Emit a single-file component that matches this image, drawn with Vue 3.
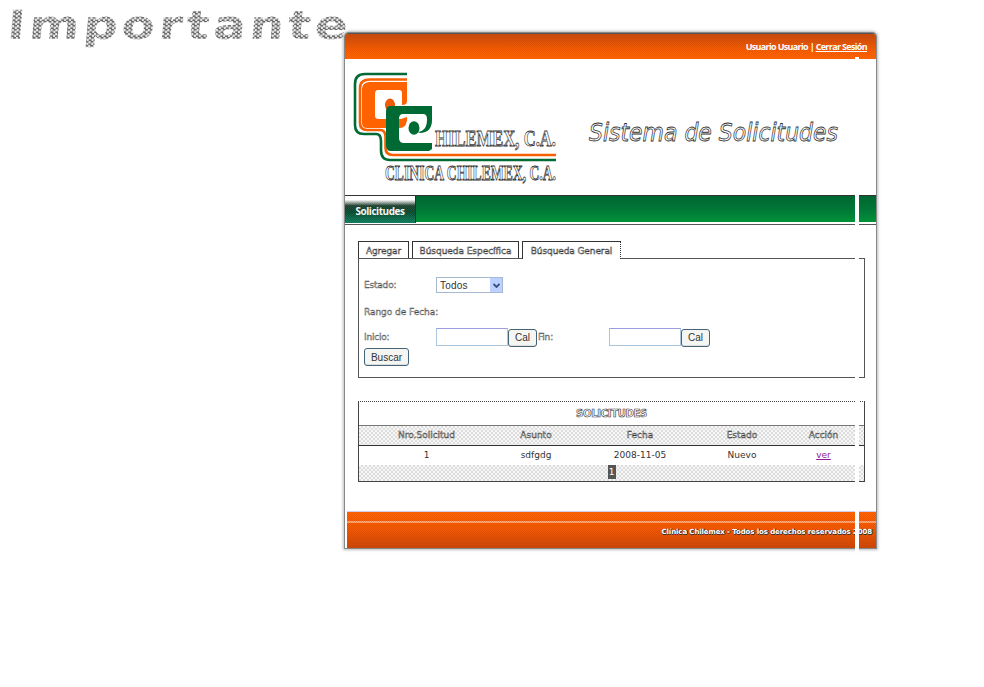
<script setup>
import { ref } from 'vue'

const tabs = [
  { label: 'Agregar', cls: 'tab-add' },
  { label: 'Búsqueda Específica', cls: 'tab-specific' },
  { label: 'Búsqueda General', cls: 'tab-general' },
]
const columns = ['Nro.Solicitud', 'Asunto', 'Fecha', 'Estado', 'Acción']
const rows = [{ id: '1', subject: 'sdfgdg', date: '2008-11-05', status: 'Nuevo' }]
const start = ref('')
const end = ref('')
</script>

<template>
  <div class="page">
    <h1 class="notice">Importante</h1>
    <div class="shell">
      <header class="top">
        <span>Usuario Usuario | <a>Cerrar Sesión</a></span>
      </header>

      <section class="brand">
        <svg class="logo" width="216" height="124" viewBox="0 0 216 124">
          <g fill="none" stroke-width="2.6">
            <path d="M57 6H15Q5 6 5 16V57Q5 66 14 66H26Q31 66 31 73V82Q31 92 40 92H206" stroke="#006b35" />
            <path d="M57 11.500H20Q10 11.500 10 20V55Q10 62 17 62H30Q35.500 62 35.500 69V80Q35.500 87 43 87H206" stroke="#f76000" />
          </g>
          <path fill="#ff6200" fill-rule="evenodd" d="M19 14H57V33Q57 37 52 37V25Q52 22 49 22H28Q25 22 25 26V48Q25 51 29 51H51L57 49V52Q56 60 50 60H17Q12 60 12 55V21Q12 15 19 14Z" />
          <ellipse cx="40" cy="37" rx="5" ry="6.500" fill="#ed5a08" />
          <path fill="#006a35" d="M40 38H82V52Q82 64 71 65L67 64Q72 64 75 60Q77 57 77 51Q77 46 73 46H53Q49 46 49 51V70Q49 75 54 75H82V81L79 83H41Q36 83 36 77V44Q36 38 40 38Z" />
          <ellipse cx="64" cy="60" rx="5.500" ry="6.800" fill="#006a35" />
          <g class="logo-text" fill="#fff" stroke="#333" stroke-width=".8">
            <text x="85" y="78" textLength="121" lengthAdjust="spacingAndGlyphs" font-size="23">HILEMEX, C.A.</text>
            <text x="35" y="112" textLength="171" lengthAdjust="spacingAndGlyphs" font-size="20">CLINICA CHILEMEX, C.A.</text>
          </g>
        </svg>
        <svg class="title" width="256" height="38" viewBox="0 0 256 38">
          <text x="3" y="25" textLength="249" lengthAdjust="spacingAndGlyphs" fill="#fff" stroke="#333" stroke-width=".8">Sistema de Solicitudes</text>
        </svg>
      </section>

      <nav class="menu"><a>Solicitudes</a></nav>

      <main>
        <div class="tabs">
          <a v-for="tab in tabs" :key="tab.label" :class="['tab', tab.cls]">{{ tab.label }}</a>
        </div>
        <form class="panel" @submit.prevent>
          <div class="field status">
            <label>Estado:</label>
            <div class="select">Todos
              <span class="arrow"><svg width="7" height="5" viewBox="0 0 7 5"><path d="M.5 1 3.5 4 6.5 1" fill="none" stroke="#345080" stroke-width="1.8" /></svg></span>
            </div>
          </div>
          <div class="range">Rango de Fecha:</div>
          <div class="field dates">
            <label>Inicio:</label>
            <input v-model="start"><button type="button">Cal</button>
            <label class="end">Fin:</label>
            <input v-model="end"><button type="button">Cal</button>
          </div>
          <button class="search" type="submit">Buscar</button>
        </form>

        <section class="results">
          <h2>SOLICITUDES</h2>
          <div class="row head"><span v-for="c in columns" :key="c">{{ c }}</span></div>
          <div v-for="r in rows" :key="r.id" class="row">
            <span>{{ r.id }}</span><span>{{ r.subject }}</span><span>{{ r.date }}</span><span>{{ r.status }}</span><span><a>ver</a></span>
          </div>
          <div class="pager"><b>1</b></div>
        </section>
      </main>

      <footer><span>Clínica Chilemex - Todos los derechos reservados 2008</span></footer>
      <i class="strip"></i>
    </div>
  </div>
</template>

<style>
body { background: #fff; overflow: hidden; }
</style>

<style scoped>
* { box-sizing: border-box; }
.page { position: relative; width: 984px; height: 687px; padding: 33px 0 0 345px; font: 9px "DejaVu Sans", sans-serif; color: #333; }
.notice {
  position: absolute; left: 6px; top: 1px; margin: 0; white-space: nowrap;
  font: bold 40px/48px "DejaVu Sans", sans-serif; letter-spacing: 3px;
  transform: scaleX(1.215) skewX(-4deg); transform-origin: 0 40px;
  color: transparent; background: repeating-conic-gradient(#6c6c6c 0 25%, #e4e4e4 0 50%) 0 0 / 4px 4px; background-clip: text;
}
.shell { position: relative; width: 531px; height: 515px; display: flex; flex-direction: column; background: #fff; border-top: 1px solid #555; border-radius: 4px 4px 0 0; box-shadow: 0 0 0 1px #888, 0 0 3px 2px #bbb; }
.top {
  height: 25px; flex: none; display: flex; align-items: center; justify-content: flex-end; padding: 0 9px 1px 0; border-radius: 3px 3px 0 0;
  color: #fff; font: bold 9px "Open Sans", sans-serif; letter-spacing: -.67px;
  background: repeating-conic-gradient(#d8330044 0 25%, transparent 0 50%) 0 0 / 2px 2px, linear-gradient(#c04c10, #f66000 65%, #ff6900);
}
.top a { text-decoration: underline; }
.brand { height: 136px; flex: none; display: flex; align-items: flex-start; padding: 9px 0 0 5px; }
.logo, .title { flex: none; overflow: visible; }
.logo-text { font-family: "Liberation Serif", serif; font-weight: bold; }
.title { margin: 48px 0 0 20px; font: italic 25px "DejaVu Sans", sans-serif; }
.menu { height: 30px; flex: none; border-top: 1px solid #333; border-bottom: 1px solid #555; background: linear-gradient(transparent 26px, #fff 26px), repeating-conic-gradient(#00802b44 0 25%, transparent 0 50%) 0 0 / 2px 2px, linear-gradient(#006331, #007438 45%, #00963b 94%); }
.menu a {
  display: flex; width: 71px; height: 27px; padding: 3px 0 0; justify-content: center; align-items: center; border-right: 1px solid #143c25;
  background: repeating-conic-gradient(#ffffff18 0 25%, transparent 0 50%) 0 0 / 2px 2px, linear-gradient(#fff 0, #fff 14%, #c5cbc7 20%, #183b2a 36%, #00452b 60%, #087958);
  color: #f5f5f5; font: bold 10px "Open Sans", sans-serif; letter-spacing: -.45px;
}
main { flex: 1; padding: 16px 11px 0 13px; }
.tabs { display: flex; gap: 3px; height: 17px; }
.tab { height: 17px; display: flex; align-items: center; justify-content: center; border: 1px solid #333; border-bottom: 0; font-size: 9px; white-space: nowrap; color: #ddd; -webkit-text-stroke: .45px #333; padding-top: 1px; }
.tab-add { width: 51px; letter-spacing: -.1px; }
.tab-specific { width: 107px; letter-spacing: -.05px; }
.tab-general { width: 99px; border-right-style: dotted; letter-spacing: -.1px; height: 18px; background: #fff; }
.panel { height: 120px; border: 1px solid #555; padding: 18px 5px 0; }
.field { display: flex; align-items: center; }
.field label { width: 72px; flex: none; letter-spacing: -.2px; }
label, .range { color: #ddd; -webkit-text-stroke: .4px #444; }
.status { height: 16px; }
.select { display: flex; justify-content: space-between; align-items: center; width: 67px; height: 16px; border: 1px solid #a7b8d1; padding-left: 3px; font: 10px "Liberation Sans", sans-serif; color: #333; letter-spacing: .2px; }
.arrow { width: 12px; height: 14px; display: flex; align-items: center; justify-content: center; background: #bdd0ff; }
.range { height: 15px; margin-top: 12px; line-height: 15px; letter-spacing: -.05px; }
.dates { height: 18px; margin-top: 8px; }
input { width: 72px; height: 18px; padding: 1px; border: 1px solid #aac7df; border-top-color: #9c9ce0; background: #fff; flex: none; border-radius: 0; }
button { width: 29px; height: 18px; padding: 0; border: 1px solid #466478; border-radius: 3px; background: #f5f5f1; box-shadow: inset 0 -1px #ddd; font: 10px "Liberation Sans", sans-serif; color: #333; }
.dates button { margin-top: 1px; }
.field .end { width: 72px; padding-left: 1px; }
.search { width: 45px; height: 18px; display: block; margin-top: 2px; }
.results { margin-top: 23px; height: 81px; border: 1px solid #444; border-top-style: dotted; }
h2 { height: 24px; margin: 0; display: flex; align-items: center; justify-content: center; border-bottom: 1px solid #777; font: bold 10px "DejaVu Sans", sans-serif; letter-spacing: -.3px; color: #fff; -webkit-text-stroke: .6px #333; }
.row { display: grid; grid-template-columns: 135px 84px 124px 80px 83px; text-align: center; height: 19px; line-height: 19px; }
.row a { color: #8e1b96; text-decoration: underline; }
.head { color: #ccc; -webkit-text-stroke: .4px #333; border-bottom: 1px solid #333; }
.head, .pager { background: repeating-conic-gradient(#ddd 0 25%, #f7f7f7 0 50%) 0 0 / 4px 4px; }
.head { height: 20px; line-height: 19px; }
.pager { height: 16px; display: flex; justify-content: center; }
.pager b { width: 8px; height: 14px; background: #555; color: #fff; text-align: center; line-height: 15px; font-weight: normal; }
footer {
  height: 37px; flex: none; display: flex; align-items: center; justify-content: flex-end; padding: 4px 4px 0 0; margin-left: 2px; border-top: 1px solid #d6ccef;
  background: repeating-conic-gradient(#d9340055 0 25%, transparent 0 50%) 0 0 / 2px 2px, linear-gradient(transparent 9px, #ffb080 9px 11px, transparent 11px), linear-gradient(#ff6900, #ef5a05 50%, #c44908);
}
footer span { color: #fff; font: bold 7px "DejaVu Sans", sans-serif; letter-spacing: -.1px; text-shadow: 0 1px #333, 1px 0 #333; }
.strip { position: absolute; left: 510px; top: 23px; width: 4px; height: 495px; background: #fff; }
</style>
